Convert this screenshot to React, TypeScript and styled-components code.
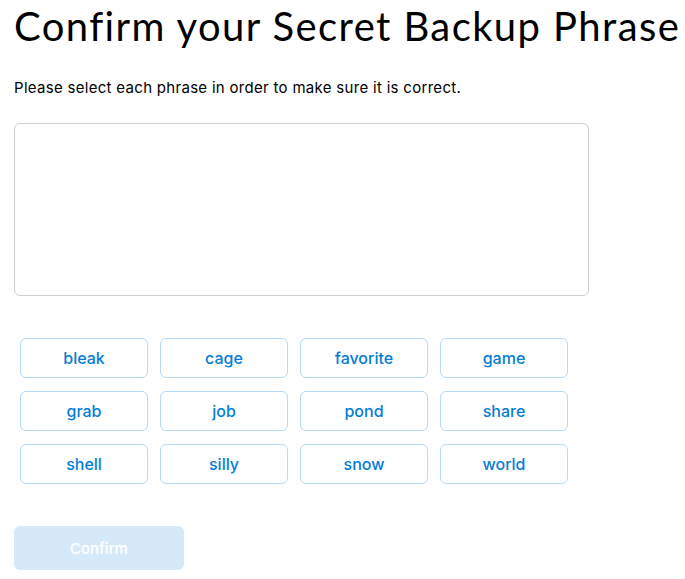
import React from "react";
import styled, { createGlobalStyle } from "styled-components";

const Global = createGlobalStyle`
  html, body { margin: 0; padding: 0; background: #fff; }
  body { font-family: Inter, "Noto Sans", sans-serif; color: #000; }
`;

const Page = styled.div`
  display: flex;
  flex-direction: column;
  padding: 0 14px;
`;

const Title = styled.h1`
  margin: 0;
  padding-top: 2px;
  font-family: Lato, Inter, sans-serif;
  font-size: 40px;
  font-weight: 400;
  line-height: 48px;
  letter-spacing: 1.4px;
  white-space: nowrap;
`;

const Subtitle = styled.p`
  margin: 28px 0 0;
  font-size: 15px;
  line-height: 20px;
  letter-spacing: 0.3px;
`;

const PhraseBox = styled.div`
  margin-top: 25px;
  width: 575px;
  height: 173px;
  box-sizing: border-box;
  border: 1px solid #cfcfcf;
  border-radius: 6px;
`;

const WordGrid = styled.div`
  margin: 42px 0 0 6px;
  display: grid;
  grid-template-columns: repeat(4, 128px);
  column-gap: 12px;
  row-gap: 13px;
`;

const WordButton = styled.button`
  height: 40px;
  box-sizing: border-box;
  border: 1px solid #b5dbf5;
  border-radius: 6px;
  background: #fff;
  color: #037dd6;
  font-family: Inter, "Noto Sans", sans-serif;
  font-size: 16px;
  font-weight: 500;
  cursor: pointer;
`;

const ConfirmButton = styled.button`
  margin-top: 42px;
  width: 170px;
  height: 44px;
  border: none;
  border-radius: 6px;
  background: #d6e9f8;
  color: #fff;
  font-family: Inter, "Noto Sans", sans-serif;
  font-size: 15px;
  font-weight: 500;
`;

const words = [
  "bleak", "cage", "favorite", "game",
  "grab", "job", "pond", "share",
  "shell", "silly", "snow", "world",
];

export default function App() {
  return (
    <>
      <Global />
      <Page>
        <Title>Confirm your Secret Backup Phrase</Title>
        <Subtitle>Please select each phrase in order to make sure it is correct.</Subtitle>
        <PhraseBox />
        <WordGrid>
          {words.map((w) => (
            <WordButton key={w}>{w}</WordButton>
          ))}
        </WordGrid>
        <div>
          <ConfirmButton disabled>Confirm</ConfirmButton>
        </div>
      </Page>
    </>
  );
}
